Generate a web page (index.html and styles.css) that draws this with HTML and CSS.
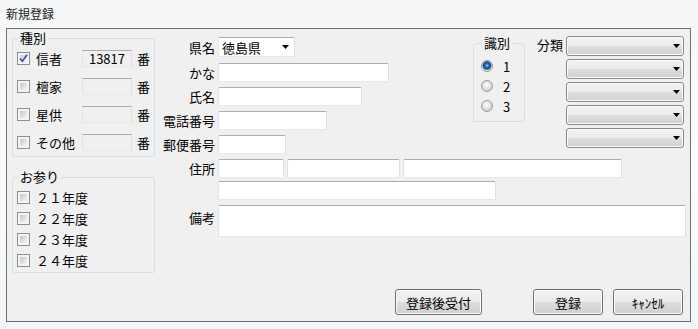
FILE: index.html
```html
<!DOCTYPE html>
<html lang="ja">
<head>
  <meta charset="UTF-8" />
  <title>新規登録</title>
  <link rel="stylesheet" href="styles.css">
</head>
<body>
  <div class="titlebar">新規登録</div>

  <div class="client">
    <!-- left column: 種別 / お参り -->
    <div class="side">
      <fieldset class="group kind">
        <legend>種別</legend>
        <div class="rows">
          <div class="kind-row">
            <span class="check on"><svg width="9" height="9" viewBox="0 0 9 9"><path d="M1 4.5 L3.4 7.2 L8 0.8" fill="none" stroke="#3b55a3" stroke-width="1.7"/></svg></span>
            <span class="kind-name">信者</span>
            <input class="num" type="text" value="13817" readonly>
            <span class="ban">番</span>
          </div>
          <div class="kind-row">
            <span class="check"></span>
            <span class="kind-name">檀家</span>
            <input class="num" type="text" readonly>
            <span class="ban">番</span>
          </div>
          <div class="kind-row">
            <span class="check"></span>
            <span class="kind-name">星供</span>
            <input class="num" type="text" readonly>
            <span class="ban">番</span>
          </div>
          <div class="kind-row">
            <span class="check"></span>
            <span class="kind-name">その他</span>
            <input class="num" type="text" readonly>
            <span class="ban">番</span>
          </div>
        </div>
      </fieldset>

      <fieldset class="group visit">
        <legend>お参り</legend>
        <div class="rows">
          <div class="visit-row"><span class="check"></span><span>２１年度</span></div>
          <div class="visit-row"><span class="check"></span><span>２２年度</span></div>
          <div class="visit-row"><span class="check"></span><span>２３年度</span></div>
          <div class="visit-row"><span class="check"></span><span>２４年度</span></div>
        </div>
      </fieldset>
    </div>

    <!-- main form -->
    <div class="main">
      <div class="top">
        <div class="fields">
          <div class="row first">
            <span class="label">県名</span>
            <div class="combo pref">
              <span>徳島県</span>
              <svg class="arrow" width="7" height="4" viewBox="0 0 7 4"><polygon points="0,0 7,0 3.5,4" fill="#000"/></svg>
            </div>
          </div>
          <div class="row kana">
            <span class="label">かな</span>
            <input class="text w-kana" type="text">
          </div>
          <div class="row">
            <span class="label">氏名</span>
            <input class="text w-name" type="text">
          </div>
          <div class="row">
            <span class="label">電話番号</span>
            <input class="text w-tel" type="text">
          </div>
          <div class="row">
            <span class="label">郵便番号</span>
            <input class="text w-zip" type="text">
          </div>
        </div>

        <fieldset class="group ident">
          <legend>識別</legend>
          <div class="rows">
            <div class="radio-row"><span class="radio on"></span><span>1</span></div>
            <div class="radio-row"><span class="radio"></span><span>2</span></div>
            <div class="radio-row"><span class="radio"></span><span>3</span></div>
          </div>
        </fieldset>

        <div class="category">
          <span class="cat-label">分類</span>
          <div class="cat-list">
            <div class="combo drop"><svg class="arrow" width="7" height="4" viewBox="0 0 7 4"><polygon points="0,0 7,0 3.5,4" fill="#000"/></svg></div>
            <div class="combo drop"><svg class="arrow" width="7" height="4" viewBox="0 0 7 4"><polygon points="0,0 7,0 3.5,4" fill="#000"/></svg></div>
            <div class="combo drop"><svg class="arrow" width="7" height="4" viewBox="0 0 7 4"><polygon points="0,0 7,0 3.5,4" fill="#000"/></svg></div>
            <div class="combo drop"><svg class="arrow" width="7" height="4" viewBox="0 0 7 4"><polygon points="0,0 7,0 3.5,4" fill="#000"/></svg></div>
            <div class="combo drop"><svg class="arrow" width="7" height="4" viewBox="0 0 7 4"><polygon points="0,0 7,0 3.5,4" fill="#000"/></svg></div>
          </div>
        </div>
      </div>

      <div class="row addr">
        <span class="label">住所</span>
        <input class="text w-addr1" type="text">
        <input class="text w-addr2" type="text">
        <input class="text w-addr3" type="text">
      </div>
      <div class="row addr2">
        <span class="label"></span>
        <input class="text w-addr4" type="text">
      </div>
      <div class="row note">
        <span class="label">備考</span>
        <textarea class="text w-note"></textarea>
      </div>

      <div class="buttons">
        <button class="btn wide">登録後受付</button>
        <button class="btn">登録</button>
        <button class="btn">ｷｬﾝｾﾙ</button>
      </div>
    </div>
  </div>
</body>
</html>
```

FILE: styles.css
```css
* {
  margin: 0;
  padding: 0;
  box-sizing: border-box;
}

body {
  width: 698px;
  height: 329px;
  overflow: hidden;
  font-family: 'Noto Sans CJK JP', sans-serif;
  font-size: 13px;
  color: #000;
  background: linear-gradient(180deg, #f4f6f8 0%, #fbfcfd 50%, #f2f6f8 100%);
}

.titlebar {
  height: 28px;
  line-height: 28px;
  padding-left: 6px;
  font-size: 12px;
  color: #1b1b1b;
}

.client {
  display: flex;
  margin-left: 6px;
  width: 685px;
  height: 294px;
  border: 1px solid #707070;
  background: #f0f0f0;
}

/* group boxes */
.group {
  border: 1px solid #d5dfe5;
  border-radius: 3px;
  min-inline-size: 0;
}

.group legend {
  font-size: 13px;
  line-height: 14px;
  padding: 0 2px;
  margin-left: 5px;
}

/* checkbox */
.check {
  width: 13px;
  height: 13px;
  flex: none;
  display: flex;
  align-items: center;
  justify-content: center;
  border: 1px solid #8e8f8f;
  padding: 2px;
  background: linear-gradient(135deg, #c4c6c9, #f6f6f6) content-box, #f4f4f4;
}

.check.on {
  padding: 0;
  background: linear-gradient(135deg, #cdd0d4, #f6f6f6) 2px 2px / 7px 7px no-repeat, #f4f4f4;
}

/* left column */
.side {
  width: 143px;
  margin-left: 5px;
  display: flex;
  flex-direction: column;
}

.kind {
  margin-top: 2px;
}

.kind .rows {
  margin-top: -1px;
}

.kind-row {
  height: 28px;
  display: flex;
  align-items: center;
  padding-left: 4px;
}

.kind-row .check {
  margin-right: 6px;
}

.kind-name {
  width: 46px;
}

.num {
  width: 50px;
  height: 17px;
  border: 1px solid;
  border-color: #abadb3 #dbdfe6 #e3e9ef #e2e3ea;
  background: #f0f0f0;
  text-align: right;
  padding-right: 6px;
  font: inherit;
  line-height: 15px;
  color: #000;
  outline: none;
}

.ban {
  margin-left: 5px;
}

.visit {
  margin-top: 13px;
}

.visit .rows {
  padding-top: 3px;
  padding-bottom: 1px;
}

.visit-row {
  height: 21px;
  display: flex;
  align-items: center;
  padding-left: 4px;
}

.visit-row .check {
  margin-right: 6px;
}

/* main form */
.main {
  width: 530px;
  margin-left: 5px;
  padding: 8px 4px 6px 0;
  display: flex;
  flex-direction: column;
}

.top {
  display: flex;
  align-items: flex-start;
}

.fields {
  width: 313px;
  display: flex;
  flex-direction: column;
}

.row {
  display: flex;
  align-items: center;
  margin-top: 5px;
}

.row.first {
  margin-top: 0;
}

.row.kana {
  margin-top: 6px;
}

.label {
  width: 55px;
  margin-right: 3px;
  text-align: right;
  flex: none;
}

.text {
  height: 19px;
  border: 1px solid;
  border-color: #abadb3 #dbdfe6 #e3e9ef #e2e3ea;
  border-radius: 2px;
  background: #fff;
  font: inherit;
  outline: none;
  resize: none;
}

.w-kana { width: 171px; }
.w-name { width: 144px; }
.w-tel { width: 109px; }
.w-zip { width: 68px; }
.w-addr1 { width: 66px; }
.w-addr2 { width: 113px; margin-left: 3px; }
.w-addr3 { width: 219px; margin-left: 3px; }
.w-addr4 { width: 278px; }
.w-note { width: 468px; height: 32px; }

.addr2 {
  margin-top: 3px;
}

.note {
  align-items: flex-start;
}

.note .label {
  padding-top: 3px;
}

/* combo boxes */
.combo {
  height: 20px;
  display: flex;
  align-items: center;
  justify-content: space-between;
}

.pref {
  width: 77px;
  padding: 0 5px 0 3px;
  background: #fff;
  border: 1px solid;
  border-color: #abadb3 #dbdfe6 #e3e9ef #e2e3ea;
  border-radius: 2px;
}

.drop {
  width: 118px;
  justify-content: flex-end;
  padding-right: 3px;
  border: 1px solid #8a8a8a;
  border-radius: 3px;
  background: linear-gradient(180deg, #f3f3f3 0%, #ebebeb 48%, #dedede 52%, #d0d0d0 100%);
  box-shadow: inset 0 0 0 1px #fbfbfb;
}

/* 識別 */
.ident {
  width: 52px;
  margin-top: -1px;
}

.ident legend {
  margin-left: 8px;
}

.ident .rows {
  padding: 6px 0 5px 7px;
}

.radio-row {
  height: 20px;
  display: flex;
  align-items: center;
  gap: 10px;
}

.radio {
  width: 12px;
  height: 12px;
  border-radius: 50%;
  border: 1px solid #9a9a9a;
  background: radial-gradient(circle at 45% 40%, #ffffff 0, #e2e2e2 45%, #c2c2c2 100%);
}

.radio.on {
  background: radial-gradient(circle at 50% 45%, #9fd3ff 0, #2d80d0 1.5px, #0c3f7e 3.5px, #7f96ad 4.3px, #e4e4e4 5px);
}

/* 分類 */
.category {
  display: flex;
  margin-left: 12px;
  margin-top: -1px;
}

.cat-label {
  width: 29px;
  line-height: 16px;
  padding-top: 1px;
}

.cat-list {
  display: flex;
  flex-direction: column;
  gap: 3px;
}

/* buttons */
.buttons {
  margin-top: auto;
  display: flex;
  justify-content: flex-end;
  padding-right: 3px;
}

.btn {
  width: 70px;
  height: 26px;
  border: 1px solid #707070;
  border-radius: 3px;
  background: linear-gradient(180deg, #f2f2f2 0%, #ebebeb 48%, #dddddd 52%, #cfcfcf 100%);
  box-shadow: inset 0 0 0 1px #fcfcfc;
  font: inherit;
  color: #000;
  margin-left: 10px;
}

.btn.wide {
  width: 87px;
  margin-right: 41px;
}
```
